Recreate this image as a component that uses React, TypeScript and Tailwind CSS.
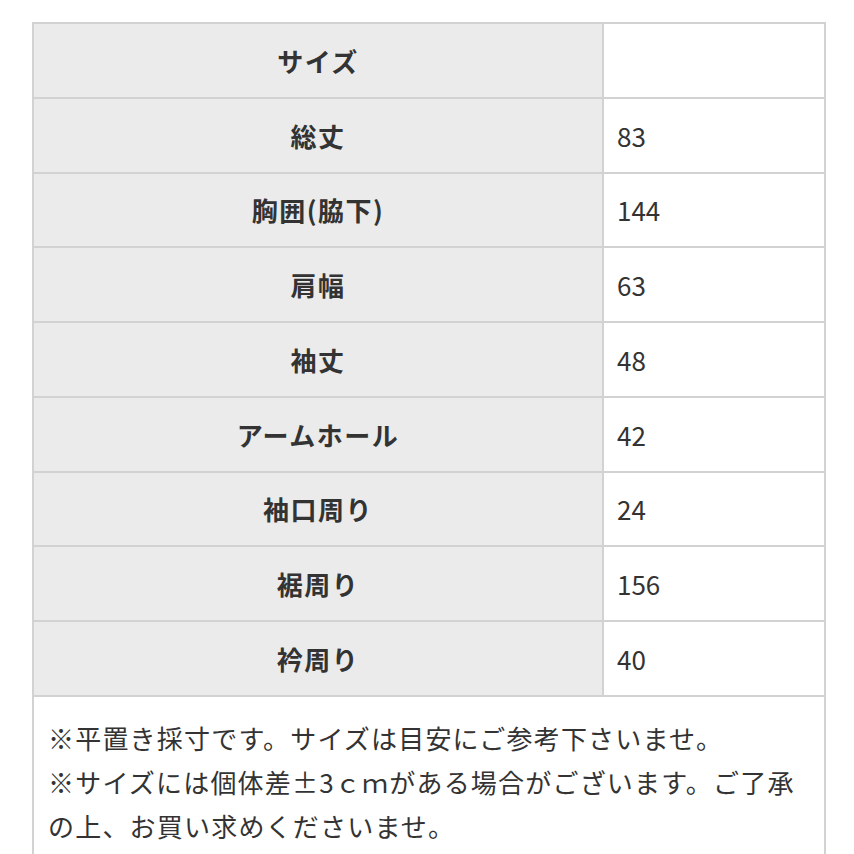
import React from "react";

const rows: [string, string][] = [
  ["サイズ", ""],
  ["総丈", "83"],
  ["胸囲(脇下)", "144"],
  ["肩幅", "63"],
  ["袖丈", "48"],
  ["アームホール", "42"],
  ["袖口周り", "24"],
  ["裾周り", "156"],
  ["衿周り", "40"],
];

export default function App() {
  return (
    <div
      className="w-[854px] h-[854px] bg-white overflow-hidden pt-[22px] pl-[32px]"
      style={{ fontFamily: '"Noto Sans CJK JP", "Noto Sans", sans-serif' }}
    >
      <div className="w-[794px] border-2 border-b-0 border-[#d2d2d2] bg-[#d2d2d2]">
        <div className="grid grid-cols-[568px_220px] gap-[2px]">
          {rows.map(([k, v], i) => (
            <React.Fragment key={i}>
              <div className="h-[72.75px] bg-[#ebebeb] flex items-center justify-center text-[26px] font-bold tracking-[1.5px] text-[#333]">
                {k}
              </div>
              <div className="h-[72.75px] bg-white flex items-center pl-[13px] text-[26px] text-[#333]">
                {v}
              </div>
            </React.Fragment>
          ))}
        </div>
        <div className="mt-[2px] bg-white h-[200px] pl-[14px] pt-[19px] pr-[20px] text-[26px] tracking-[1.2px] leading-[44px] text-[#333]">
          <p>※平置き採寸です。サイズは目安にご参考下さいませ。</p>
          <p>※サイズには個体差±3ｃｍがある場合がございます。ご了承の上、お買い求めくださいませ。</p>
        </div>
      </div>
    </div>
  );
}
